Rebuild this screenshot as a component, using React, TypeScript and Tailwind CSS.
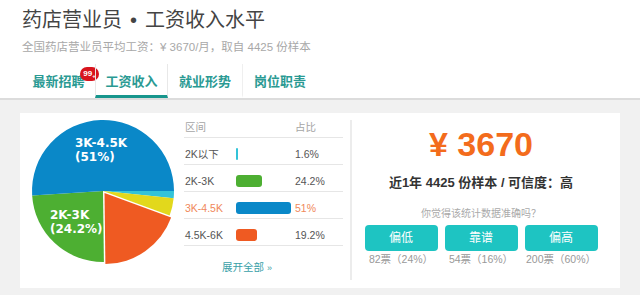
import React from "react";

type Slice = { color: string; pct: number; explode?: boolean };

const slices: Slice[] = [
  { color: "#33c3d8", pct: 1.6 },
  { color: "#e2d81c", pct: 4.0 },
  { color: "#ef5a22", pct: 19.2, explode: true },
  { color: "#4daf32", pct: 24.2 },
  { color: "#0a88c8", pct: 51 },
];

function polar(cx: number, cy: number, r: number, deg: number): [number, number] {
  const a = (deg * Math.PI) / 180;
  return [cx + r * Math.cos(a), cy + r * Math.sin(a)];
}

function slicePath(cx: number, cy: number, r: number, a0: number, a1: number) {
  const [x0, y0] = polar(cx, cy, r, a0);
  const [x1, y1] = polar(cx, cy, r, a1);
  const large = a1 - a0 > 180 ? 1 : 0;
  return `M${cx},${cy} L${x0.toFixed(2)},${y0.toFixed(2)} A${r},${r} 0 ${large} 1 ${x1.toFixed(2)},${y1.toFixed(2)} Z`;
}

function Pie() {
  const cx = 83;
  const cy = 78;
  const r = 71;
  let a = 0;
  const paths = slices.map((s, i) => {
    const a0 = a;
    const a1 = a + (s.pct / 100) * 360;
    a = a1;
    const mid = ((a0 + a1) / 2) * (Math.PI / 180);
    const dx = s.explode ? 2.6 * Math.cos(mid) : 0;
    const dy = s.explode ? 2.6 * Math.sin(mid) : 0;
    return (
      <path
        key={i}
        d={slicePath(cx, cy, r, a0, i === slices.length - 1 ? 360 : a1)}
        fill={s.color}
        transform={`translate(${dx.toFixed(2)},${dy.toFixed(2)})`}
      />
    );
  });
  return (
    <svg width="164" height="175" viewBox="0 0 164 175">
      {paths}
      <g fontFamily="DejaVu Sans, sans-serif" fontWeight="bold" fontSize="12" fill="#ffffff">
        <text x="55" y="34">3K-4.5K</text>
        <text x="55" y="48">(51%)</text>
        <text x="30" y="105.5">2K-3K</text>
        <text x="30" y="119.5">(24.2%)</text>
      </g>
    </svg>
  );
}

const rows = [
  { label: "2K以下", pct: 1.6, color: "#33c3d8", hl: false },
  { label: "2K-3K", pct: 24.2, color: "#4daf32", hl: false },
  { label: "3K-4.5K", pct: 51, color: "#0a88c8", hl: true },
  { label: "4.5K-6K", pct: 19.2, color: "#ef5a22", hl: false },
];

function Table() {
  return (
    <div className="w-[159px] shrink-0">
      <div className="h-[25px] pt-[7px] border-b border-[#e6e6e6] flex text-[10.5px] leading-[15px] text-[#a5a5a5]">
        <span className="w-[111px] pl-[1px]">区间</span>
        <span>占比</span>
      </div>
      {rows.map((r) => (
        <div
          key={r.label}
          className="h-[27px] pt-[6px] border-b border-[#e6e6e6] flex items-center text-[10.5px] leading-[14px]"
        >
          <span className={`w-[52px] pl-[1px] ${r.hl ? "text-[#f0885a]" : "text-[#555555]"}`}>{r.label}</span>
          <span className="w-[59px] flex items-center">
            <span
              className="block h-[12px] rounded-[3px]"
              style={{ width: Math.max(2, Math.round((r.pct * 108) / 100)), backgroundColor: r.color }}
            />
          </span>
          <span className={r.hl ? "text-[#f0885a]" : "text-[#555555]"}>{r.pct}%</span>
        </div>
      ))}
      <div className="mt-[14px] pl-[38px] text-[10.5px] leading-[14px] text-[#3a9fa8]">
        展开全部 <span className="text-[9px]">»</span>
      </div>
    </div>
  );
}

const votes = [
  { label: "偏低", text: "82票（24%）" },
  { label: "靠谱", text: "54票（16%）" },
  { label: "偏高", text: "200票（60%）" },
];

function Summary() {
  return (
    <div className="w-[258px] shrink-0 flex flex-col items-center">
      <div className="mt-[11px] text-[34px] leading-[40px] font-bold text-[#f36c1c]">¥ 3670</div>
      <div className="mt-[10px] text-[13px] leading-[18px] font-bold text-[#333333]">
        近1年 4425 份样本 / 可信度：高
      </div>
      <div className="mt-[15px] text-[10px] leading-[14px] text-[#aaaaaa]">你觉得该统计数据准确吗？</div>
      <div className="mt-[4px] flex gap-[7px]">
        {votes.map((v) => (
          <div key={v.label} className="w-[73px] flex flex-col items-center">
            <div className="w-[73px] h-[26px] rounded-[4px] bg-[#1ec4c2] text-white text-[12px] leading-[26px] text-center">
              {v.label}
            </div>
            <div className="mt-[1px] text-[10.5px] leading-[14px] text-[#999999] whitespace-nowrap">{v.text}</div>
          </div>
        ))}
      </div>
    </div>
  );
}

const tabs = [
  { label: "最新招聘", w: "w-[73px]", active: false, badge: true, extra: "" },
  { label: "工资收入", w: "w-[73px]", active: true, badge: false, extra: "" },
  { label: "就业形势", w: "w-[75px]", active: false, badge: false, extra: "border-r border-r-[#efefef]" },
  { label: "岗位职责", w: "w-[74px]", active: false, badge: false, extra: "" },
];

export default function App() {
  return (
    <div className="w-[640px] h-[295px] overflow-hidden bg-[#f1f1f1] font-['Liberation_Sans','Noto_Sans_CJK_SC',sans-serif]">
      <div className="bg-white px-[22px] pt-[6px]">
        <h1 className="text-[20px] leading-[28px] font-normal text-[#444444] whitespace-nowrap">
          药店营业员<span className="px-[8px]">•</span>工资收入水平
        </h1>
        <p className="mt-[5px] text-[11.5px] leading-[16px] text-[#a8a8a8] whitespace-nowrap">
          全国药店营业员平均工资：¥ 3670/月，取自 4425 份样本
        </p>
        <div className="mt-[9px] flex">
          {tabs.map((t) => (
            <div
              key={t.label}
              className={`relative ${t.w} h-[34px] pt-[10px] text-center text-[13px] leading-[16px] font-bold text-[#2a9a93] border-b-[3px] ${
                t.active ? "border-b-[#17968d] border-x border-x-[#e8e8e8]" : "border-b-transparent"
              } ${t.extra}`}
            >
              {t.label}
              {t.badge && (
                <span className="absolute left-[58px] top-[3px] h-[14px] w-[19px] rounded-full bg-[#d8141d] text-white text-[8px] font-bold leading-[14px] flex items-center justify-center">
                  99<span className="text-[6px] leading-[6px] mt-[3px]">+</span>
                </span>
              )}
            </div>
          ))}
        </div>
      </div>
      <div className="h-[2px] bg-[#dcdcdc]" />
      <div className="pt-[13px] px-[20px]">
        <div className="bg-white h-[175px] flex">
          <div className="w-[164px] shrink-0">
            <Pie />
          </div>
          <Table />
          <div className="w-[7px] shrink-0" />
          <div className="w-[2px] shrink-0 mt-[7px] h-[160px] bg-[#ececec]" />
          <Summary />
        </div>
      </div>
    </div>
  );
}
